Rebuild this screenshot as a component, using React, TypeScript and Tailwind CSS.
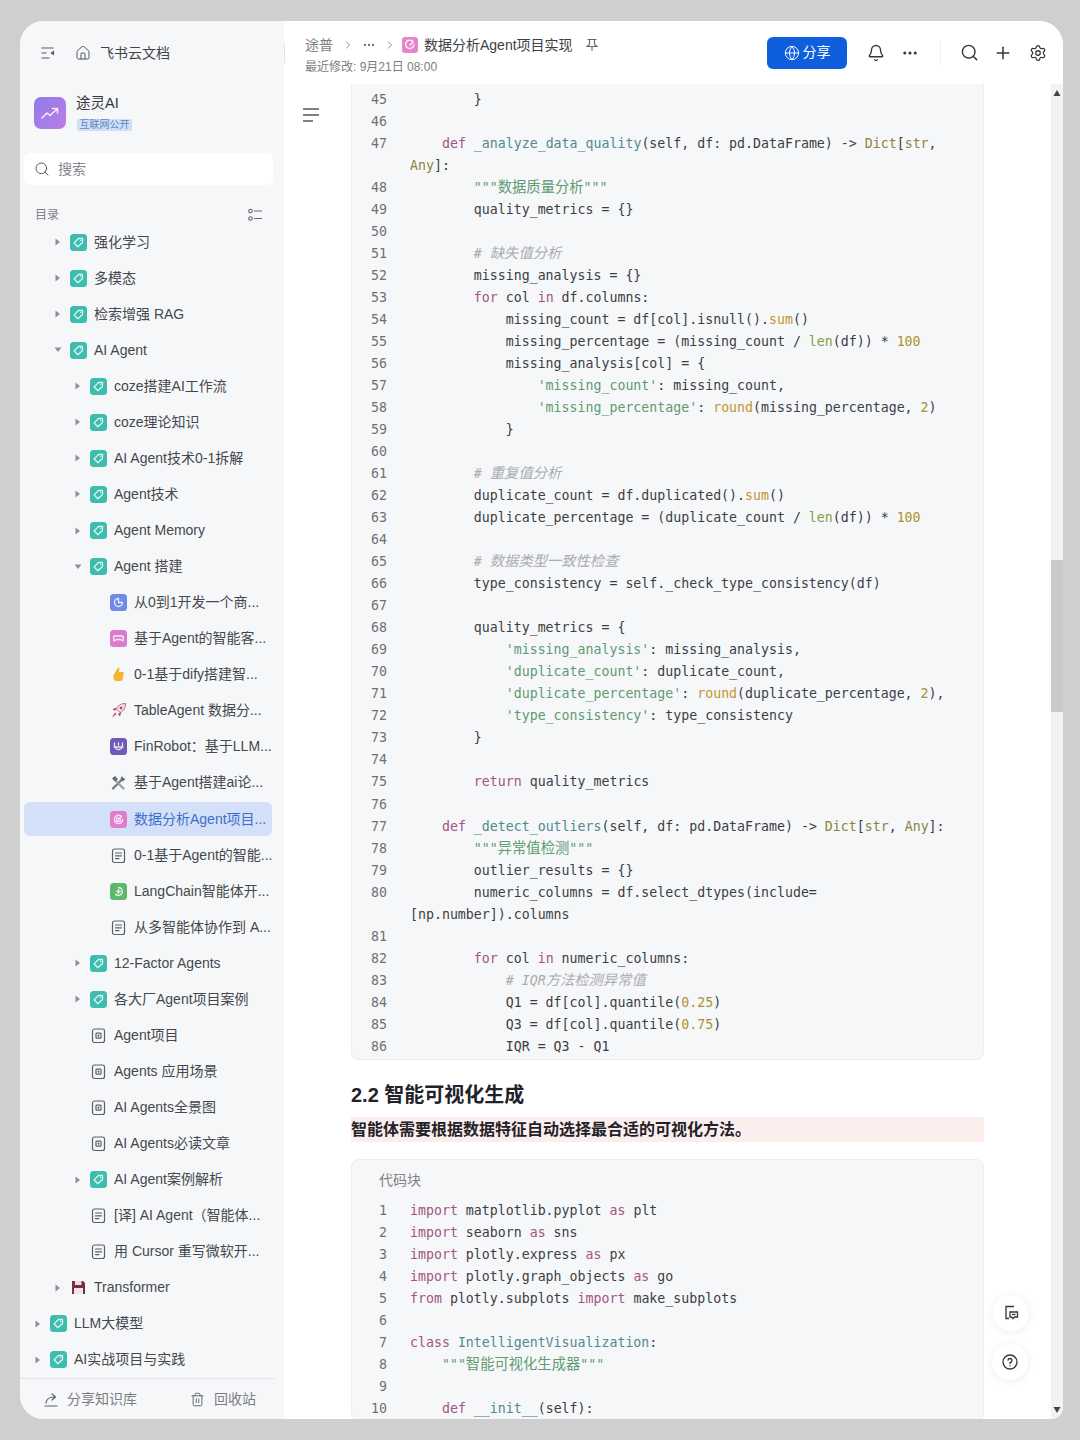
import { Bell, ChevronRight, Ellipsis, Globe, House, Plus, Search, Settings, Trash2 } from "lucide-react";
import type { ReactNode } from "react";

const monoFont = "font-['DejaVu_Sans_Mono','Noto_Sans_CJK_SC',monospace]";

const tokenClass: Record<string, string> = {
  comment: "text-[#a9acb0] italic",
  string: "text-[#5e9a72]",
  keyword: "text-[#a2557f]",
  name: "text-[#4f8a8f]",
  call: "text-[#c2962f]",
  len: "text-[#87a03f]",
  type: "text-[#8d8340]",
  num: "text-[#a8922f]",
};

const tokenRe =
  /(?<comment>#.*$)|(?<string>"""[^"]*"""|'[^']*')|(?<name>(?<=def |class )\w+)|(?<keyword>\b(?:def|for|in|return|import|from|as|class)\b)|(?<call>\b(?:sum|round)(?=\())|(?<len>\blen(?=\())|(?<type>\b(?:Dict|Any|str)\b)|(?<num>\b\d+(?:\.\d+)?\b)/g;

// chinese runs are a little bigger than the mono size in the picture
function withCjk(text: string): ReactNode[] {
  return text.split(/([\u4e00-\u9fff]+)/).map((part, i) =>
    /[\u4e00-\u9fff]/.test(part) ? (
      <span key={i} className="text-[14.3px] leading-[0]">
        {part}
      </span>
    ) : (
      part
    )
  );
}

function highlight(line: string) {
  const out: ReactNode[] = [];
  let last = 0;
  for (const m of line.matchAll(tokenRe)) {
    const kind = Object.entries(m.groups ?? {}).find(([, v]) => v !== undefined)?.[0] ?? "";
    out.push(withCjk(line.slice(last, m.index)));
    out.push(
      <span key={m.index} className={tokenClass[kind]}>
        {withCjk(m[0])}
      </span>
    );
    last = m.index + m[0].length;
  }
  out.push(withCjk(line.slice(last)));
  return out;
}

const codeA = [
  "        }",
  "",
  "    def _analyze_data_quality(self, df: pd.DataFrame) -> Dict[str,\nAny]:",
  '        """数据质量分析"""',
  "        quality_metrics = {}",
  "",
  "        # 缺失值分析",
  "        missing_analysis = {}",
  "        for col in df.columns:",
  "            missing_count = df[col].isnull().sum()",
  "            missing_percentage = (missing_count / len(df)) * 100",
  "            missing_analysis[col] = {",
  "                'missing_count': missing_count,",
  "                'missing_percentage': round(missing_percentage, 2)",
  "            }",
  "",
  "        # 重复值分析",
  "        duplicate_count = df.duplicated().sum()",
  "        duplicate_percentage = (duplicate_count / len(df)) * 100",
  "",
  "        # 数据类型一致性检查",
  "        type_consistency = self._check_type_consistency(df)",
  "",
  "        quality_metrics = {",
  "            'missing_analysis': missing_analysis,",
  "            'duplicate_count': duplicate_count,",
  "            'duplicate_percentage': round(duplicate_percentage, 2),",
  "            'type_consistency': type_consistency",
  "        }",
  "",
  "        return quality_metrics",
  "",
  "    def _detect_outliers(self, df: pd.DataFrame) -> Dict[str, Any]:",
  '        """异常值检测"""',
  "        outlier_results = {}",
  "        numeric_columns = df.select_dtypes(include=\n[np.number]).columns",
  "",
  "        for col in numeric_columns:",
  "            # IQR方法检测异常值",
  "            Q1 = df[col].quantile(0.25)",
  "            Q3 = df[col].quantile(0.75)",
  "            IQR = Q3 - Q1",
];

const codeB = [
  "import matplotlib.pyplot as plt",
  "import seaborn as sns",
  "import plotly.express as px",
  "import plotly.graph_objects as go",
  "from plotly.subplots import make_subplots",
  "",
  "class IntelligentVisualization:",
  '    """智能可视化生成器"""',
  "",
  "    def __init__(self):",
];

function CodeLines({ lines, start }: { lines: string[]; start: number }) {
  return (
    <div className={`${monoFont} text-[13.25px] leading-[22.02px] text-[#3b3e43]`}>
      {lines.map((line, i) => (
        <div key={i} className="flex">
          <span className="w-[35px] shrink-0 text-right text-[#6d7176]">{start + i}</span>
          <span className="ml-[23px] whitespace-pre">{line ? highlight(line) : " "}</span>
        </div>
      ))}
    </div>
  );
}

type IconKind =
  | "tag" | "clock" | "game" | "thumb" | "rocket" | "robot" | "tools"
  | "target" | "doc" | "brain" | "embed" | "floppy";

function PageIcon({ kind }: { kind: IconKind }) {
  const box = "w-[17px] h-[17px] shrink-0";
  const tile = (fill: string, inner: ReactNode) => (
    <svg viewBox="0 0 17 17" className={box}>
      <rect width="17" height="17" rx="3.5" fill={fill} />
      <g fill="none" stroke="#fff" strokeOpacity=".85" strokeWidth="1.3" strokeLinecap="round" strokeLinejoin="round">
        {inner}
      </g>
    </svg>
  );
  switch (kind) {
    case "tag":
      return tile("#3cbdad", <path d="M8.5 4.5h4v4l-4.6 4.2-3.8-3.8z M10.6 6.4h.1" />);
    case "clock":
      return tile("#6f8be6", <path d="M8.5 4.5a4 4 0 1 0 4 4h-4z" />);
    case "game":
      return tile("#db7bcb", <path d="M5 6h7a1.5 1.5 0 0 1 1 2.6V11l-2.5-1.5h-4L4 11V8.6A1.5 1.5 0 0 1 5 6z" />);
    case "target":
      return tile("#e27ccb", <path d="M11.5 5.5a4.2 4.2 0 1 0 1.2 3 M8.5 8.5l3-3 M8.5 6.6a2 2 0 1 0 2 2" />);
    case "robot":
      return tile("#6f5bb5", <path d="M4.5 5v2.5a4 4 0 0 0 8 0V5 M4 9h9 M8.5 5v2" />);
    case "brain":
      return tile("#5db86b", <path d="M8.5 4.5a4 4 0 1 1-3 6.7 M6.5 8.5h4 M8.5 6.5v4" />);
    case "thumb":
      return (
        <svg viewBox="0 0 17 17" className={box}>
          <path d="M8 1.500c1 0 1.500.9 1.300 2L9 6h3.500c1 0 1.500 1 1.200 1.800l-1.200 6c-.2.7-.8 1.200-1.500 1.200H6.500C5 15 3.500 14 3.500 12V9.500c0-1 .6-1.800 1.400-2.500z" fill="#f5b335" />
        </svg>
      );
    case "rocket":
      return (
        <svg viewBox="0 0 17 17" className={box}>
          <path d="M15.500 1.500c-4 0-7 1.500-9.300 5.300l4 4c3.800-2.300 5.300-5.300 5.300-9.300z" fill="#eadfe2" stroke="#b8606f" strokeWidth=".9" />
          <path d="M6.800 5.800 2.500 7l2.500 2zM11.200 10.200 10 14.500l-2-2.500zM5 10.500l1.500 1.500L2 15.500z" fill="#c43d52" />
          <circle cx="11" cy="6" r="1.300" fill="#c43d52" />
        </svg>
      );
    case "tools":
      return (
        <svg viewBox="0 0 17 17" className={box}>
          <path d="M3 14.500 11.500 6" stroke="#74777c" strokeWidth="2.200" strokeLinecap="round" />
          <path d="M5 6l8.500 8.500" stroke="#9a9da1" strokeWidth="2.200" strokeLinecap="round" />
          <path d="M2 4.500 5 2l3 3-3 2.500zM10.500 5 12 1.800l1 2.200 2.500.5L13 7.500z" fill="#66696e" />
        </svg>
      );
    case "doc":
      return (
        <svg viewBox="0 0 17 17" className={box} fill="none" stroke="#5b5f64" strokeWidth="1.200" strokeLinecap="round">
          <rect x="2.500" y="2" width="12" height="13.500" rx="2" />
          <path d="M5.500 6h6M5.500 8.800h6M5.500 11.600h3.500" />
        </svg>
      );
    case "embed":
      return (
        <svg viewBox="0 0 17 17" className={box} fill="none" stroke="#5b5f64" strokeWidth="1.200">
          <rect x="2.500" y="2" width="12" height="13.500" rx="2" />
          <rect x="6" y="6.200" width="5" height="5" rx=".8" />
          <path d="M8.500 7.500v2.400M7.300 8.700h2.400" strokeWidth=".8" />
        </svg>
      );
    case "floppy":
      return (
        <svg viewBox="0 0 17 17" className={box}>
          <path d="M2 2h11l2 2v11H2z" fill="#74304a" />
          <rect x="5" y="2" width="6.500" height="4" fill="#f3d9df" />
          <rect x="4" y="9" width="9" height="6" fill="#f6e3e9" />
        </svg>
      );
  }
}

type TreeRow = { level: 0 | 1 | 2 | 3; caret?: "right" | "down"; icon: IconKind; label: string; active?: boolean };

const tree: TreeRow[] = [
  { level: 1, caret: "right", icon: "tag", label: "强化学习" },
  { level: 1, caret: "right", icon: "tag", label: "多模态" },
  { level: 1, caret: "right", icon: "tag", label: "检索增强 RAG" },
  { level: 1, caret: "down", icon: "tag", label: "AI Agent" },
  { level: 2, caret: "right", icon: "tag", label: "coze搭建AI工作流" },
  { level: 2, caret: "right", icon: "tag", label: "coze理论知识" },
  { level: 2, caret: "right", icon: "tag", label: "AI Agent技术0-1拆解" },
  { level: 2, caret: "right", icon: "tag", label: "Agent技术" },
  { level: 2, caret: "right", icon: "tag", label: "Agent Memory" },
  { level: 2, caret: "down", icon: "tag", label: "Agent 搭建" },
  { level: 3, icon: "clock", label: "从0到1开发一个商..." },
  { level: 3, icon: "game", label: "基于Agent的智能客..." },
  { level: 3, icon: "thumb", label: "0-1基于dify搭建智..." },
  { level: 3, icon: "rocket", label: "TableAgent 数据分..." },
  { level: 3, icon: "robot", label: "FinRobot：基于LLM..." },
  { level: 3, icon: "tools", label: "基于Agent搭建ai论..." },
  { level: 3, icon: "target", label: "数据分析Agent项目...", active: true },
  { level: 3, icon: "doc", label: "0-1基于Agent的智能..." },
  { level: 3, icon: "brain", label: "LangChain智能体开..." },
  { level: 3, icon: "doc", label: "从多智能体协作到 A..." },
  { level: 2, caret: "right", icon: "tag", label: "12-Factor Agents" },
  { level: 2, caret: "right", icon: "tag", label: "各大厂Agent项目案例" },
  { level: 2, icon: "embed", label: "Agent项目" },
  { level: 2, icon: "embed", label: "Agents 应用场景" },
  { level: 2, icon: "embed", label: "AI Agents全景图" },
  { level: 2, icon: "embed", label: "AI Agents必读文章" },
  { level: 2, caret: "right", icon: "tag", label: "AI Agent案例解析" },
  { level: 2, icon: "doc", label: "[译] AI Agent（智能体..." },
  { level: 2, icon: "doc", label: "用 Cursor 重写微软开..." },
  { level: 1, caret: "right", icon: "floppy", label: "Transformer" },
  { level: 0, caret: "right", icon: "tag", label: "LLM大模型" },
  { level: 0, caret: "right", icon: "tag", label: "AI实战项目与实践" },
];

const indent = ["pl-[9px]", "pl-[29px]", "pl-[49px]", "pl-[69px]"];

function Caret({ dir }: { dir?: "right" | "down" }) {
  return (
    <span className="w-[10px] shrink-0 flex justify-center">
      {dir === "right" && (
        <svg viewBox="0 0 10 10" className="w-[10px] h-[10px]">
          <path d="M2.500 1.500l4.500 3.500-4.500 3.500z" fill="#8c8f94" />
        </svg>
      )}
      {dir === "down" && (
        <svg viewBox="0 0 10 10" className="w-[10px] h-[10px]">
          <path d="M1.500 2.500l3.500 4.500 3.500-4.500z" fill="#8c8f94" />
        </svg>
      )}
    </span>
  );
}

function Sidebar() {
  return (
    <aside className="w-[264px] shrink-0 flex flex-col bg-[#f6f7f9]">
      <div className="mt-[20px] h-[24px] flex items-center pl-[20px] text-[14px] text-[#3f4348]">
        <svg viewBox="0 0 16 16" className="w-[16px] h-[16px] shrink-0" fill="none" stroke="#55595e" strokeWidth="1.200">
          <path d="M1.500 3h12M1.500 8h5M1.500 13h8" />
          <path d="M14 5.500v5L10.500 8z" fill="#55595e" stroke="none" />
        </svg>
        <House size={16} strokeWidth={1.5} className="ml-[19px] text-[#55595e]" />
        <span className="ml-[9px]">飞书云文档</span>
      </div>

      <div className="mt-[32px] h-[32px] flex pl-[14px]">
        <div className="w-[32px] h-[32px] rounded-[7px] bg-gradient-to-br from-[#8f7be6] to-[#bb7ee6] flex items-center justify-center">
          <svg viewBox="0 0 20 20" className="w-[20px] h-[20px]" fill="none" stroke="#fbe6fb" strokeWidth="1.600" strokeLinejoin="round" strokeLinecap="round">
            <path d="M2 15l5-5 3 2.500L17 6M12.500 5.500H17.500V10" />
          </svg>
        </div>
        <div className="ml-[10px] flex flex-col">
          <span className="text-[14.500px] leading-[12px] text-[#33363b]">途灵AI</span>
          <span className="mt-[10px] ml-[1px] w-[55px] h-[12px] rounded-[2px] bg-[#cfdff7] text-[10px] leading-[12px] text-center text-[#5f86c6]">
            互联网公开
          </span>
        </div>
      </div>

      <div className="mt-[24px] ml-[4px] w-[249px] h-[32px] rounded-md bg-white flex items-center pl-[10px] text-[14px] text-[#85888d]">
        <Search size={16} strokeWidth={1.5} className="text-[#55595e]" />
        <span className="ml-[8px]">搜索</span>
      </div>

      <div className="mt-[20px] h-[19px] flex items-center justify-between pl-[15px] pr-[21px] text-[12px] text-[#7f8287]">
        <span>目录</span>
        <svg viewBox="0 0 16 16" className="w-[16px] h-[16px]" fill="none" stroke="#66696e" strokeWidth="1.100">
          <circle cx="3.500" cy="4" r="1.800" />
          <circle cx="3.500" cy="11.500" r="1.800" />
          <path d="M7 4h8M7 11.500h8" />
        </svg>
      </div>

      <div className="flex flex-col">
        {tree.map((row) => (
          <div key={row.label} className="h-[36.07px] flex items-center">
            <div
              className={`ml-[4px] w-[248px] h-[34px] rounded-md flex items-center ${indent[row.level]} ${
                row.active ? "bg-[#d3e0f7] text-[#3b6fce]" : "text-[#44484d]"
              }`}
            >
              <Caret dir={row.caret} />
              <span className="ml-[7px]">
                <PageIcon kind={row.icon} />
              </span>
              <span className="ml-[7px] text-[14px] whitespace-nowrap">{row.label}</span>
            </div>
          </div>
        ))}
      </div>

      <div className="mr-[9px] flex-1 border-t border-[#e4e5e8] flex items-center pt-[1px] text-[14px] text-[#7b7e83]">
        <svg viewBox="0 0 16 16" className="ml-[23px] w-[16px] h-[16px]" fill="none" stroke="#5f6368" strokeWidth="1.200" strokeLinecap="round" strokeLinejoin="round">
          <path d="M2 14h12M3 11c.5-4 3.500-6 8-6M9 2l3.500 3L9 8" />
        </svg>
        <span className="ml-[8px]">分享知识库</span>
        <Trash2 size={15} strokeWidth={1.5} className="ml-[53px] text-[#5f6368]" />
        <span className="ml-[9px]">回收站</span>
      </div>
    </aside>
  );
}

function Header() {
  return (
    <header className="h-[63px] shrink-0 flex items-center bg-white">
      <span className="w-px h-[20px] bg-[#e2e3e6]" />
      <div className="mt-[5px] pl-[20px] flex flex-col">
        <div className="h-[22px] flex items-center text-[14px] text-[#7b7e83]">
          <span>途普</span>
          <ChevronRight size={12} className="ml-[9px] text-[#8a8d92]" />
          <Ellipsis size={14} className="ml-[8px] text-[#6b6e73]" />
          <ChevronRight size={12} className="ml-[8px] text-[#8a8d92]" />
          <span className="ml-[6px]">
            <svg viewBox="0 0 16 16" className="w-[16px] h-[16px]">
              <rect width="16" height="16" rx="3" fill="#e784cd" />
              <path d="M11 4.500a4.200 4.200 0 1 0 1 3M8 8l3-3" fill="none" stroke="#fff" strokeWidth="1.200" strokeLinecap="round" />
            </svg>
          </span>
          <span className="ml-[6px] text-[#3c3f44]">数据分析Agent项目实现</span>
          <svg viewBox="0 0 12 14" className="ml-[13px] w-[12px] h-[14px]" fill="none" stroke="#66696e" strokeWidth="1.100">
            <path d="M1.500 1.500h9M3.500 1.500v5L1 8.500h10L8.500 6.500v-5M6 8.500V13" />
          </svg>
        </div>
        <div className="mt-[2px] text-[12px] leading-[18px] text-[#7b7e83]">最近修改: 9月21日 08:00</div>
      </div>

      <div className="ml-auto flex items-center pr-[8px] text-[#33363b]">
        <button className="w-[80px] h-[32px] rounded-md bg-[#0f5fdc] flex items-center justify-center text-white text-[14px]">
          <Globe size={16} strokeWidth={1.500} />
          <span className="ml-[3px]">分享</span>
        </button>
        <span className="ml-[12px] w-[34px] flex justify-center">
          <Bell size={18} strokeWidth={1.800} />
        </span>
        <span className="w-[34px] flex justify-center">
          <Ellipsis size={18} strokeWidth={2} />
        </span>
        <span className="ml-[13px] w-px h-[24px] bg-[#eeeff1]" />
        <span className="ml-[11px] w-[34px] flex justify-center">
          <Search size={19} strokeWidth={1.800} />
        </span>
        <span className="w-[34px] flex justify-center">
          <Plus size={20} strokeWidth={1.800} />
        </span>
        <span className="ml-[1px] w-[34px] flex justify-center">
          <Settings size={18} strokeWidth={1.700} />
        </span>
      </div>
    </header>
  );
}

export default function App() {
  return (
    <div className="h-[1440px] overflow-hidden bg-[#cfcfcf] pt-[21px] pb-[21px] pl-[20px] pr-[17px] font-['Liberation_Sans','Noto_Sans_CJK_SC',sans-serif]">
      <div className="h-full flex overflow-hidden rounded-t-[24px] rounded-bl-[24px] rounded-br-[12px] bg-white">
        <Sidebar />

        <div className="flex-1 min-w-0 flex flex-col">
          <Header />

          <div className="relative flex-1 min-h-0 flex">
            {/* outline toggle */}
            <div className="w-[67px] shrink-0 pt-[24px] pl-[19px]">
              <svg viewBox="0 0 16 14" className="w-[16px] h-[14px]" fill="none" stroke="#55595e" strokeWidth="1.300">
                <path d="M0 1h16M0 7h16M0 13h10" />
              </svg>
            </div>

            <main className="w-[633px] shrink-0 overflow-hidden">
              <div className="pt-[5px] pb-[1px] bg-[#f6f7f9] border-x border-b border-[#eceef0] rounded-b-lg">
                <CodeLines lines={codeA} start={45} />
              </div>

              <h2 className="mt-[19px] h-[32px] text-[20px] leading-[32px] font-bold text-[#1f2329]">2.2 智能可视化生成</h2>
              <p className="mt-[6px] h-[25px] bg-[#fdeeee] text-[16px] leading-[25px] font-bold text-[#1f2329]">
                智能体需要根据数据特征自动选择最合适的可视化方法。
              </p>

              <div className="mt-[17px] pt-[9px] bg-[#f6f7f9] border border-[#eceef0] rounded-lg">
                <div className="h-[22px] pl-[27px] text-[14px] leading-[22px] text-[#7f8287]">代码块</div>
                <div className="mt-[9px]">
                  <CodeLines lines={codeB} start={1} />
                </div>
              </div>
            </main>

            <div className="flex-1" />

            {/* scrollbar */}
            <div className="w-[12px] shrink-0 bg-[#f2f2f2] flex flex-col items-center">
              <svg viewBox="0 0 8 6" className="mt-[6px] w-[8px] h-[6px] shrink-0">
                <path d="M4 0l3.500 6h-7z" fill="#444" />
              </svg>
              <div className="mt-[464px] w-full h-[152px] bg-[#c9c9c9] shrink-0" />
              <svg viewBox="0 0 8 6" className="mt-auto mb-[6px] w-[8px] h-[6px] shrink-0">
                <path d="M.500 0h7L4 6z" fill="#444" />
              </svg>
            </div>

            {/* floating helpers */}
            <button className="absolute left-[709px] top-[1211px] w-[36px] h-[36px] rounded-full bg-white shadow-[0_1px_8px_rgba(0,0,0,0.08)] flex items-center justify-center">
              <svg viewBox="0 0 16 16" className="w-[16px] h-[16px]" fill="none" stroke="#33363b" strokeWidth="1.300">
                <path d="M11 1.500H3v12h3" />
                <path d="M7 7h7.500v5h-3l-1.500 1.500L8.500 12H7z" />
                <path d="M9 9.500h3.500" />
              </svg>
            </button>
            <button className="absolute left-[708px] top-[1260px] w-[36px] h-[36px] rounded-full bg-white shadow-[0_1px_8px_rgba(0,0,0,0.08)] flex items-center justify-center">
              <svg viewBox="0 0 16 16" className="w-[16px] h-[16px]" fill="none" stroke="#33363b" strokeWidth="1.300" strokeLinecap="round">
                <circle cx="8" cy="8" r="7" />
                <path d="M6 6.200A2 2 0 1 1 8 8.500v1" />
                <path d="M8 11.700v.1" />
              </svg>
            </button>
          </div>
        </div>
      </div>
    </div>
  );
}
